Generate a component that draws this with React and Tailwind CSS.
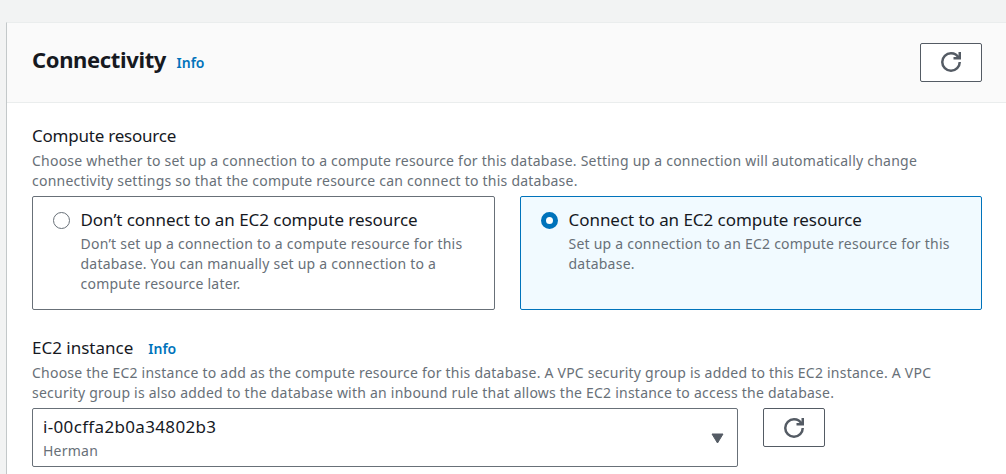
function RefreshIcon({ className = "" }) {
  return (
    <svg className={`block size-5 ${className}`} viewBox="0 0 16 16" fill="none" stroke="#545b64" strokeWidth="2" aria-hidden="true">
      <path d="M10 5h5V0" />
      <path d="M15 8a6.98 6.98 0 0 1-7 7 6.98 6.98 0 0 1-7-7 6.98 6.98 0 0 1 7-7c2.79 0 5.2 1.63 6.33 4" />
    </svg>
  );
}

function RefreshButton({ iconClass }) {
  return (
    <button aria-label="Refresh" className="flex h-[39px] w-[62px] shrink-0 items-start justify-center rounded-[2px] border border-[#545b64] bg-white">
      <RefreshIcon className={iconClass} />
    </button>
  );
}

function Description({ children }) {
  return <div className="text-[14px] leading-5 tracking-[0.228px] text-[#687078]">{children}</div>;
}

function Line({ children }) {
  return <span className="block whitespace-nowrap">{children}</span>;
}

function Option({ selected, title, children }) {
  return (
    <div className={`flex h-[114px] rounded-[2px] border pl-5 pt-[9px] ${selected ? "border-[#0073bb] bg-[#f1faff]" : "border-[#687078] bg-white"}`}>
      <span className={`mt-[6px] size-[17px] shrink-0 rounded-full bg-white ${selected ? "border-[5px] border-[#0073bb]" : "border border-[#687078]"}`} />
      <div className="ml-[10.5px]">
        <div className="whitespace-nowrap text-[17px] leading-7 tracking-[-0.05px] text-[#16191f]">{title}</div>
        <Description>{children}</Description>
      </div>
    </div>
  );
}

export default function App() {
  return (
    <div className="h-[474px] w-[1006px] overflow-hidden bg-[#f2f3f3] pl-[6px] pt-[22px] font-['Noto_Sans',sans-serif]">
      <section className="h-[452px] border-l border-t border-l-[#c3c8c9] border-t-[#eaeded] bg-white">
        <header className="flex h-20 items-start justify-between border-b border-[#eaeded] bg-[#fafafa] pl-[25px] pr-6 pt-5">
          <div className="-mt-px flex items-baseline">
            <h2 className="text-[22px] font-bold leading-[34px] tracking-[-0.36px] text-[#16191f]">Connectivity</h2>
            <a className="ml-[10.5px] text-[14px] font-semibold text-[#0073bb]">Info</a>
          </div>
          <RefreshButton iconClass="mt-2" />
        </header>
        <div className="pl-[25px] pr-6 pt-[19px]">
          <div className="mb-px text-[17px] leading-7 tracking-[-0.22px] text-[#16191f]">Compute resource</div>
          <Description>
            <Line>Choose whether to set up a connection to a compute resource for this database. Setting up a connection will automatically change</Line>
            <Line>connectivity settings so that the compute resource can connect to this database.</Line>
          </Description>
          <div className="mt-[5px] grid grid-cols-[463px_462px] gap-[25px]">
            <Option title="Don’t connect to an EC2 compute resource">
              <Line>Don’t set up a connection to a compute resource for this</Line>
              <Line>database. You can manually set up a connection to a</Line>
              <Line>compute resource later.</Line>
            </Option>
            <Option selected title="Connect to an EC2 compute resource">
              <Line>Set up a connection to an EC2 compute resource for this</Line>
              <Line>database.</Line>
            </Option>
          </div>
          <div className="mb-px mt-6 flex items-baseline">
            <span className="text-[17px] leading-7 text-[#16191f]">EC2 instance</span>
            <a className="ml-[15px] text-[14px] font-semibold text-[#0073bb]">Info</a>
          </div>
          <Description>
            <Line>Choose the EC2 instance to add as the compute resource for this database. A VPC security group is added to this EC2 instance. A VPC</Line>
            <Line>security group is also added to the database with an inbound rule that allows the EC2 instance to access the database.</Line>
          </Description>
          <div className="mt-[5px] flex items-start gap-[25px]">
            <div className="flex h-[59px] w-[706px] items-start justify-between rounded-[2px] border border-[#687078] bg-white pl-[10px] pr-[13.5px] pt-1">
              <div>
                <div className="text-[17px] leading-7 tracking-[0.34px] text-[#16191f]">i-00cffa2b0a34802b3</div>
                <Description>Herman</Description>
              </div>
              <svg className="mt-5 h-[11px] w-[13px]" viewBox="0 0 13 11" fill="#545b64" stroke="#545b64" strokeLinejoin="round" aria-hidden="true">
                <path d="M1 1h11L6.500 10Z" />
              </svg>
            </div>
            <RefreshButton iconClass="mt-[9px]" />
          </div>
        </div>
      </section>
    </div>
  );
}
